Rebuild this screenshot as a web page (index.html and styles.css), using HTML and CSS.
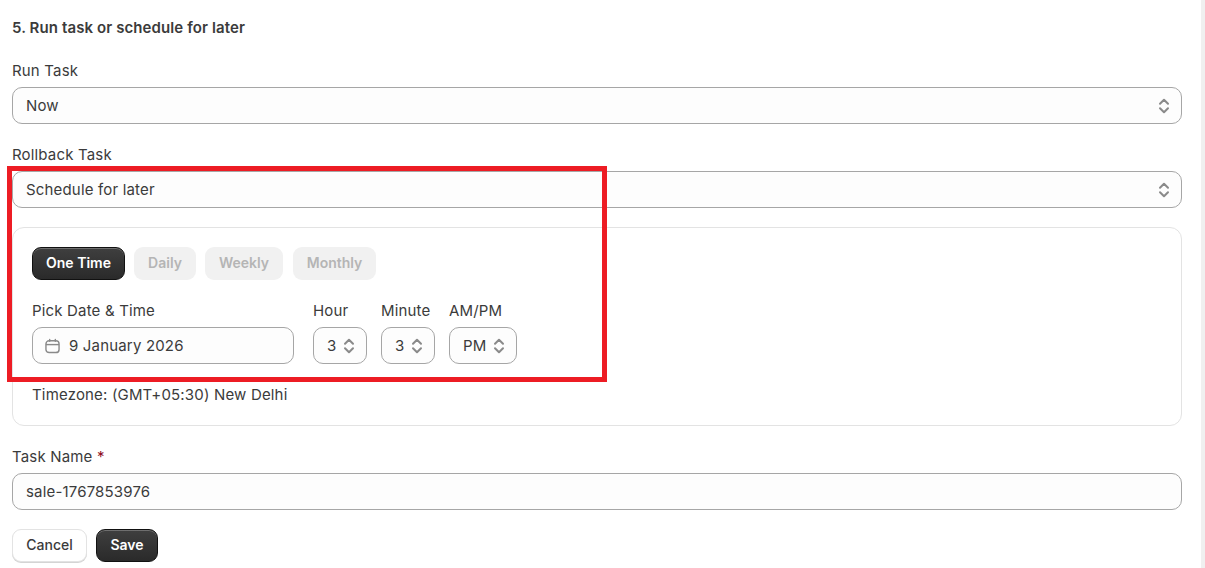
FILE: index.html
```html
<!DOCTYPE html>
<html>
<head>
  <meta charset="UTF-8">
  <title>Run task or schedule for later</title>
  <link rel="stylesheet" href="styles.css">
</head>
<body>
  <svg class="icon-defs" width="0" height="0">
    <symbol id="chevrons" viewBox="0 0 12 18">
      <path d="M2 6.8 L6 2.8 L10 6.8 M2 11.2 L6 15.2 L10 11.2" fill="none" stroke="currentColor" stroke-width="2" stroke-linecap="round" stroke-linejoin="round"/>
    </symbol>
  </svg>

  <main class="page">
    <h2 class="section-title">5. Run task or schedule for later</h2>

    <div class="field field-first">
      <div class="label">Run Task</div>
      <div class="control">
        <span class="value">Now</span>
        <svg class="chevrons"><use href="#chevrons"/></svg>
      </div>
    </div>

    <div class="field">
      <div class="label">Rollback Task</div>
      <div class="control">
        <span class="value">Schedule for later</span>
        <svg class="chevrons"><use href="#chevrons"/></svg>
      </div>
    </div>

    <div class="card">
      <div class="tabs">
        <button class="btn btn-dark tab">One Time</button>
        <button class="tab tab-off tab-daily">Daily</button>
        <button class="tab tab-off tab-weekly">Weekly</button>
        <button class="tab tab-off tab-monthly">Monthly</button>
      </div>

      <div class="time-row">
        <div class="time-field date-field">
          <div class="label">Pick Date &amp; Time</div>
          <div class="control control-date">
            <svg class="calendar" viewBox="0 0 16 16">
              <path d="M5 1 V3 M11 1 V3" fill="none" stroke="currentColor" stroke-width="1.5" stroke-linecap="round"/>
              <rect x="1" y="2.4" width="14" height="12.6" rx="3.4" fill="none" stroke="currentColor" stroke-width="1.5"/>
              <path d="M1 6.5 H15" fill="none" stroke="currentColor" stroke-width="1.5"/>
            </svg>
            <span class="value">9 January 2026</span>
          </div>
        </div>
        <div class="time-field hour-field">
          <div class="label">Hour</div>
          <div class="control control-small">
            <span class="value">3</span>
            <svg class="chevrons"><use href="#chevrons"/></svg>
          </div>
        </div>
        <div class="time-field minute-field">
          <div class="label">Minute</div>
          <div class="control control-small">
            <span class="value">3</span>
            <svg class="chevrons"><use href="#chevrons"/></svg>
          </div>
        </div>
        <div class="time-field ampm-field">
          <div class="label">AM/PM</div>
          <div class="control control-small">
            <span class="value">PM</span>
            <svg class="chevrons"><use href="#chevrons"/></svg>
          </div>
        </div>
      </div>

      <p class="timezone">Timezone: (GMT+05:30) New Delhi</p>
    </div>

    <div class="field field-name">
      <div class="label">Task Name <span class="required">*</span></div>
      <div class="control">
        <span class="value">sale-1767853976</span>
      </div>
    </div>

    <div class="actions">
      <button class="btn btn-light">Cancel</button>
      <button class="btn btn-dark btn-save">Save</button>
    </div>

    <div class="highlight"></div>
  </main>

  <div class="scroll-track"></div>
</body>
</html>
```

FILE: styles.css
```css
html, body {
  margin: 0;
  height: 100%;
  overflow: hidden;
}
body {
  font-family: Inter, 'Liberation Sans', sans-serif;
  font-size: 15px;
  letter-spacing: 0.17px;
  color: #3b3b3b;
  background-color: #fff;
  display: flex;
}
.icon-defs {
  position: absolute;
}
.page {
  position: relative;
  width: 1170px;
  padding: 18px 0 0 12px;
}
.section-title {
  margin: 0;
  font-size: 15px;
  line-height: 19px;
  font-weight: 600;
  letter-spacing: 0.1px;
}
.field {
  margin-top: 20px;
}
.field-first {
  margin-top: 23px;
}
.label {
  height: 24px;
  line-height: 22px;
  margin-bottom: 3px;
  white-space: nowrap;
}
.required {
  color: #8e0b21;
}
.control {
  height: 37px;
  box-sizing: border-box;
  display: flex;
  align-items: center;
  justify-content: space-between;
  padding: 0 11px 0 13px;
  border: 1px solid #a6a6a6;
  border-radius: 10px;
  background-color: #fdfdfd;
  white-space: nowrap;
}
.value {
  margin-bottom: 1px;
}
.chevrons {
  width: 12px;
  height: 18px;
  color: #8a8a8a;
  flex: none;
}
.card {
  margin-top: 19px;
  height: 199px;
  box-sizing: border-box;
  padding: 19px 19px 0;
  border: 1px solid #e3e3e3;
  border-radius: 12px;
  background-color: #fff;
}
.tabs {
  display: flex;
  gap: 9px;
}
button {
  font-family: inherit;
  font-size: 14px;
  font-weight: 600;
  letter-spacing: 0;
  border: none;
  padding: 0 0 2px;
  height: 33px;
  border-radius: 9px;
}
.tab {
  width: 93px;
}
.tab-off {
  background-color: #f1f1f1;
  color: #b5b5b5;
}
.tab-daily {
  width: 62px;
}
.tab-weekly {
  width: 78px;
}
.tab-monthly {
  width: 83px;
  margin-left: 1px;
}
.btn-dark {
  color: #fff;
  background: linear-gradient(#3f3f3f, #2a2a2a);
  border: 1px solid #111;
  box-shadow: inset 0 1px 0 rgba(255,255,255,0.25);
}
.btn-light {
  width: 75px;
  font-weight: 500;
  color: #3b3b3b;
  background-color: #fff;
  border: 1px solid #e3e3e3;
  box-shadow: 0 1px 0 #d4d4d4;
}
.btn-save {
  width: 62px;
}
.time-row {
  display: flex;
  margin-top: 20px;
}
.date-field {
  width: 262px;
  margin-right: 19px;
}
.hour-field, .minute-field {
  width: 54px;
  margin-right: 14px;
}
.ampm-field {
  width: 68px;
}
.control-date {
  justify-content: flex-start;
  gap: 9px;
  padding-left: 12px;
}
.calendar {
  width: 15px;
  height: 16px;
  color: #8a8a8a;
  flex: none;
}
.timezone {
  margin: 20px 0 0;
  line-height: 22px;
}
.actions {
  display: flex;
  gap: 9px;
  margin-top: 19px;
}
.highlight {
  position: absolute;
  left: 7px;
  top: 166px;
  width: 590px;
  height: 206px;
  border: 5px solid #ed1c24;
}
.scroll-track {
  margin-left: 19px;
  width: 4px;
  background-color: #f0f0f0;
}
```
